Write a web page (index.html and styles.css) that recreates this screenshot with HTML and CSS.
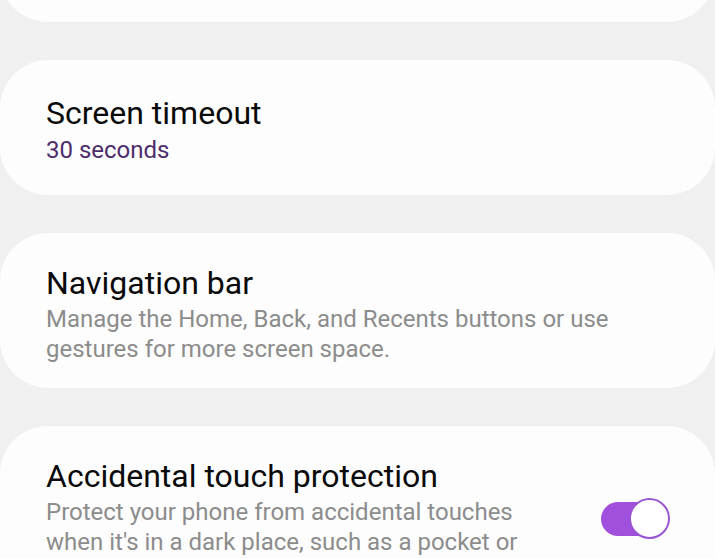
FILE: index.html
```html
<!DOCTYPE html>
<html lang="en">
<head>
<meta charset="utf-8">
<title>Display settings</title>
<link rel="stylesheet" href="styles.css">
</head>
<body>
<main class="list">
  <section class="card card-prev"></section>
  <section class="card card-short">
    <div class="text">
      <div class="title">Screen timeout</div>
      <div class="value">30 seconds</div>
    </div>
  </section>
  <section class="card">
    <div class="text">
      <div class="title">Navigation bar</div>
      <div class="desc">Manage the Home, Back, and Recents buttons or use gestures for more screen space.</div>
    </div>
  </section>
  <section class="card">
    <div class="text text-with-switch">
      <div class="title">Accidental touch protection</div>
      <div class="desc">Protect your phone from accidental touches when it's in a dark place, such as a pocket or bag.</div>
    </div>
    <div class="switch on" role="switch" aria-checked="true">
      <span class="thumb"></span>
    </div>
  </section>
</main>
</body>
</html>
```
FILE: styles.css
```css
html, body {
  margin: 0;
  padding: 0;
  background: #f0f0f0;
  height: 100%;
  overflow: hidden;
}

body {
  font-family: Roboto, "Noto Sans", "Liberation Sans", sans-serif;
  -webkit-font-smoothing: antialiased;
}

.list {
  display: flex;
  flex-direction: column;
  gap: 38px;
  margin-top: -78px;
}

.card {
  background: #fdfdfd;
  border-radius: 48px;
  padding: 29px 45px 24px 46px;
  display: flex;
  align-items: center;
}

.card-prev {
  height: 100px;
  padding: 0;
}

.card-short {
  height: 135px;
  box-sizing: border-box;
  padding-top: 32px;
  padding-bottom: 30px;
  align-items: flex-start;
}

.text {
  flex: 1;
  min-width: 0;
}

.text-with-switch {
  margin-right: 60px;
}

.title {
  font-size: 32px;
  line-height: 42px;
  color: #0a0a0a;
}

.value {
  font-size: 24px;
  line-height: 30px;
  margin-top: 1px;
  color: #4e2c6c;
}

.desc {
  font-size: 24px;
  line-height: 30px;
  color: #8c8c8c;
}

.switch {
  position: relative;
  width: 69px;
  height: 41px;
  flex: none;
  margin-bottom: 6px;
}

.switch::before {
  content: "";
  position: absolute;
  left: 0;
  top: 4px;
  width: 64px;
  height: 34px;
  border-radius: 17px;
  background: #a050dc;
}

.thumb {
  position: absolute;
  right: 0;
  top: 0;
  width: 37px;
  height: 37px;
  border-radius: 50%;
  background: #ffffff;
  border: 2px solid #9a55d2;
}
```
